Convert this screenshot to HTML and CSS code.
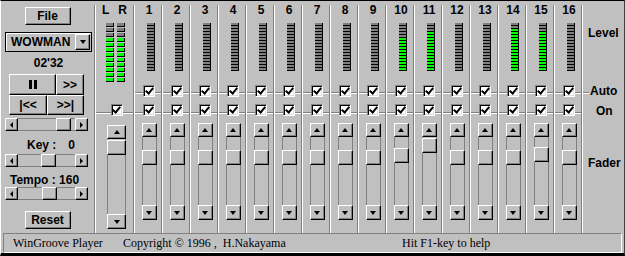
FILE: index.html
```html
<!DOCTYPE html>
<html lang="en">

<head>
    <meta charset="UTF-8">
    <title>WinGroove Player</title>
    <link rel="stylesheet" href="styles.css">
</head>

<body>
    <div class="window">
        <div class="main">

            <!-- Left panel: file, song, transport, key and tempo -->
            <div class="panel">
                <div class="btn file-btn">File</div>
                <div class="combo">
                    <span class="combo-text">WOWMAN</span>
                    <span class="btn combo-btn"><i class="tri tri-down"></i></span>
                </div>
                <div class="time">02'32</div>
                <div class="transport">
                    <div class="btn pause-btn"><span class="pause"></span></div>
                    <div class="btn ff-btn">&gt;&gt;</div>
                    <div class="btn prev-btn">|&lt;&lt;</div>
                    <div class="btn next-btn">&gt;&gt;|</div>
                </div>
                <div class="hscroll pos-scroll">
                    <span class="btn sbtn"><i class="tri tri-left"></i></span>
                    <div class="htrack"><span class="btn thumb" style="margin-left:38px"></span></div>
                    <span class="btn sbtn"><i class="tri tri-right"></i></span>
                </div>
                <div class="value key-label"><span>Key :</span><span class="key-val">0</span></div>
                <div class="hscroll">
                    <span class="btn sbtn"><i class="tri tri-left"></i></span>
                    <div class="htrack"><span class="btn thumb" style="margin-left:23px"></span></div>
                    <span class="btn sbtn"><i class="tri tri-right"></i></span>
                </div>
                <div class="value tempo-label">Tempo : 160</div>
                <div class="hscroll">
                    <span class="btn sbtn"><i class="tri tri-left"></i></span>
                    <div class="htrack"><span class="btn thumb" style="margin-left:24px"></span></div>
                    <span class="btn sbtn"><i class="tri tri-right"></i></span>
                </div>
                <div class="btn reset-btn">Reset</div>
            </div>
            <div class="sep"></div>

            <!-- Master L/R -->
            <div class="master">
                <div class="lr-head"><span>L</span><span>R</span></div>
                <div class="lr-meters">
                    <div class="lr-meter"><div class="lit" style="height:45px"></div></div>
                    <div class="lr-meter"><div class="lit" style="height:45px"></div></div>
                </div>
                <div class="row on"><span class="cb"></span></div>
                <div class="fader master-fader">
                    <span class="btn sbtn up"></span>
                    <div class="vtrack"><span class="btn thumb" style="margin-top:1px"></span></div>
                    <span class="btn sbtn down"></span>
                </div>
            </div>
            <div class="sep"></div>

            <!-- Channels 1-16 -->
            <div class="ch">
                <div class="num">1</div>
                <div class="meter"></div>
                <div class="row auto"><span class="cb"></span></div>
                <div class="row on"><span class="cb"></span></div>
                <div class="fader"><span class="btn sbtn up"></span><div class="vtrack"><span class="btn thumb" style="margin-top:13px"></span></div><span class="btn sbtn down"></span></div>
            </div>
            <div class="sep"></div>
            <div class="ch">
                <div class="num">2</div>
                <div class="meter"></div>
                <div class="row auto"><span class="cb"></span></div>
                <div class="row on"><span class="cb"></span></div>
                <div class="fader"><span class="btn sbtn up"></span><div class="vtrack"><span class="btn thumb" style="margin-top:13px"></span></div><span class="btn sbtn down"></span></div>
            </div>
            <div class="sep"></div>
            <div class="ch">
                <div class="num">3</div>
                <div class="meter"></div>
                <div class="row auto"><span class="cb"></span></div>
                <div class="row on"><span class="cb"></span></div>
                <div class="fader"><span class="btn sbtn up"></span><div class="vtrack"><span class="btn thumb" style="margin-top:13px"></span></div><span class="btn sbtn down"></span></div>
            </div>
            <div class="sep"></div>
            <div class="ch">
                <div class="num">4</div>
                <div class="meter"></div>
                <div class="row auto"><span class="cb"></span></div>
                <div class="row on"><span class="cb"></span></div>
                <div class="fader"><span class="btn sbtn up"></span><div class="vtrack"><span class="btn thumb" style="margin-top:13px"></span></div><span class="btn sbtn down"></span></div>
            </div>
            <div class="sep"></div>
            <div class="ch">
                <div class="num">5</div>
                <div class="meter"></div>
                <div class="row auto"><span class="cb"></span></div>
                <div class="row on"><span class="cb"></span></div>
                <div class="fader"><span class="btn sbtn up"></span><div class="vtrack"><span class="btn thumb" style="margin-top:13px"></span></div><span class="btn sbtn down"></span></div>
            </div>
            <div class="sep"></div>
            <div class="ch">
                <div class="num">6</div>
                <div class="meter"></div>
                <div class="row auto"><span class="cb"></span></div>
                <div class="row on"><span class="cb"></span></div>
                <div class="fader"><span class="btn sbtn up"></span><div class="vtrack"><span class="btn thumb" style="margin-top:13px"></span></div><span class="btn sbtn down"></span></div>
            </div>
            <div class="sep"></div>
            <div class="ch">
                <div class="num">7</div>
                <div class="meter"></div>
                <div class="row auto"><span class="cb"></span></div>
                <div class="row on"><span class="cb"></span></div>
                <div class="fader"><span class="btn sbtn up"></span><div class="vtrack"><span class="btn thumb" style="margin-top:13px"></span></div><span class="btn sbtn down"></span></div>
            </div>
            <div class="sep"></div>
            <div class="ch">
                <div class="num">8</div>
                <div class="meter"></div>
                <div class="row auto"><span class="cb"></span></div>
                <div class="row on"><span class="cb"></span></div>
                <div class="fader"><span class="btn sbtn up"></span><div class="vtrack"><span class="btn thumb" style="margin-top:13px"></span></div><span class="btn sbtn down"></span></div>
            </div>
            <div class="sep"></div>
            <div class="ch">
                <div class="num">9</div>
                <div class="meter"></div>
                <div class="row auto"><span class="cb"></span></div>
                <div class="row on"><span class="cb"></span></div>
                <div class="fader"><span class="btn sbtn up"></span><div class="vtrack"><span class="btn thumb" style="margin-top:13px"></span></div><span class="btn sbtn down"></span></div>
            </div>
            <div class="sep"></div>
            <div class="ch">
                <div class="num">10</div>
                <div class="meter"><div class="lit" style="height:33px"></div></div>
                <div class="row auto"><span class="cb"></span></div>
                <div class="row on"><span class="cb"></span></div>
                <div class="fader"><span class="btn sbtn up"></span><div class="vtrack"><span class="btn thumb" style="margin-top:11px"></span></div><span class="btn sbtn down"></span></div>
            </div>
            <div class="sep"></div>
            <div class="ch">
                <div class="num">11</div>
                <div class="meter"><div class="lit" style="height:39px"></div></div>
                <div class="row auto"><span class="cb"></span></div>
                <div class="row on"><span class="cb"></span></div>
                <div class="fader"><span class="btn sbtn up"></span><div class="vtrack"><span class="btn thumb" style="margin-top:1px"></span></div><span class="btn sbtn down"></span></div>
            </div>
            <div class="sep"></div>
            <div class="ch">
                <div class="num">12</div>
                <div class="meter"></div>
                <div class="row auto"><span class="cb"></span></div>
                <div class="row on"><span class="cb"></span></div>
                <div class="fader"><span class="btn sbtn up"></span><div class="vtrack"><span class="btn thumb" style="margin-top:13px"></span></div><span class="btn sbtn down"></span></div>
            </div>
            <div class="sep"></div>
            <div class="ch">
                <div class="num">13</div>
                <div class="meter"></div>
                <div class="row auto"><span class="cb"></span></div>
                <div class="row on"><span class="cb"></span></div>
                <div class="fader"><span class="btn sbtn up"></span><div class="vtrack"><span class="btn thumb" style="margin-top:13px"></span></div><span class="btn sbtn down"></span></div>
            </div>
            <div class="sep"></div>
            <div class="ch">
                <div class="num">14</div>
                <div class="meter"><div class="lit" style="height:42px"></div></div>
                <div class="row auto"><span class="cb"></span></div>
                <div class="row on"><span class="cb"></span></div>
                <div class="fader"><span class="btn sbtn up"></span><div class="vtrack"><span class="btn thumb" style="margin-top:13px"></span></div><span class="btn sbtn down"></span></div>
            </div>
            <div class="sep"></div>
            <div class="ch">
                <div class="num">15</div>
                <div class="meter"><div class="lit" style="height:39px"></div></div>
                <div class="row auto"><span class="cb"></span></div>
                <div class="row on"><span class="cb"></span></div>
                <div class="fader"><span class="btn sbtn up"></span><div class="vtrack"><span class="btn thumb" style="margin-top:10px"></span></div><span class="btn sbtn down"></span></div>
            </div>
            <div class="sep"></div>
            <div class="ch">
                <div class="num">16</div>
                <div class="meter"></div>
                <div class="row auto"><span class="cb"></span></div>
                <div class="row on"><span class="cb"></span></div>
                <div class="fader"><span class="btn sbtn up"></span><div class="vtrack"><span class="btn thumb" style="margin-top:13px"></span></div><span class="btn sbtn down"></span></div>
            </div>
            <div class="sep"></div>

            <!-- Row labels -->
            <div class="labels">
                <div class="lbl level-lbl">Level</div>
                <div class="lbl auto-lbl">Auto</div>
                <div class="lbl on-lbl">On</div>
                <div class="lbl fader-lbl">Fader</div>
            </div>
        </div>

        <div class="status">
            <span class="st-name">WinGroove Player</span>
            <span class="st-copy">Copyright &copy; 1996 ,&nbsp; H.Nakayama</span>
            <span>Hit F1-key to help</span>
        </div>
    </div>
</body>

</html>
```

FILE: styles.css
```css
* {
    box-sizing: border-box;
}

body {
    margin: 0;
    background-color: #c0c0c0;
    font-family: "Liberation Sans", Arial, sans-serif;
    font-size: 12px;
    font-weight: bold;
    color: #000;
}

.window {
    width: 625px;
    height: 256px;
    border-top: 1px solid #000;
    border-left: 1px solid #fff;
    border-right: 1px solid #404040;
    border-bottom: 3px solid #000;
    display: flex;
    flex-direction: column;
}

.main {
    height: 232px;
    display: flex;
}

/* etched vertical divider */
.sep {
    width: 2px;
    margin-top: 4px;
    border-left: 1px solid #808080;
    border-right: 1px solid #fff;
}

/* raised 3D button */
.btn {
    display: flex;
    align-items: center;
    justify-content: center;
    background-color: #c0c0c0;
    border: 1px solid;
    border-color: #fff #000 #000 #fff;
    box-shadow: inset -1px -1px 0 #808080;
    line-height: 1;
}

.tri {
    display: block;
    width: 0;
    height: 0;
}

.tri-down {
    border-left: 3.5px solid transparent;
    border-right: 3.5px solid transparent;
    border-top: 4px solid #000;
}

.tri-left {
    border-top: 3px solid transparent;
    border-bottom: 3px solid transparent;
    border-right: 3px solid #000;
}

.tri-right {
    border-top: 3px solid transparent;
    border-bottom: 3px solid transparent;
    border-left: 3px solid #000;
}

/* Left panel */
.panel {
    width: 93px;
    display: flex;
    flex-direction: column;
    align-items: center;
}

.file-btn {
    margin-top: 6px;
    width: 46px;
    height: 18px;
}

.combo {
    margin-top: 7px;
    margin-left: 2px;
    width: 87px;
    height: 20px;
    padding: 1px;
    border: 1px solid #000;
    box-shadow: inset 1px 1px 0 #fff;
    display: flex;
    align-items: center;
}

.combo-text {
    flex: 1;
    padding-left: 4px;
}

.combo-btn {
    width: 15px;
    height: 16px;
}

.time {
    margin-top: 4px;
    height: 14px;
    line-height: 14px;
    margin-left: 2px;
}

.transport {
    margin-top: 4px;
    margin-right: 2px;
    width: 75px;
    display: grid;
    grid-template-columns: 38px 9px 28px;
    grid-template-rows: 21px 20px;
}

.pause-btn {
    grid-column: 1 / 3;
}

.prev-btn {
    grid-column: 1 / 2;
}

.next-btn {
    grid-column: 2 / 4;
}

.pause {
    width: 8px;
    height: 9px;
    border-left: 3px solid #000;
    border-right: 3px solid #000;
}

.hscroll {
    width: 83px;
    height: 13px;
    display: flex;
    margin-right: 2px;
}

.pos-scroll {
    margin-top: 3px;
}

.sbtn {
    flex: none;
    width: 13px;
}

.htrack {
    flex: 1;
    border-top: 1px solid #808080;
    border-bottom: 1px solid #808080;
    display: flex;
}

.htrack .thumb {
    width: 15px;
    height: 13px;
    margin-top: -1px;
}

.value {
    height: 14px;
    line-height: 14px;
    align-self: flex-start;
}

.key-label {
    margin-top: 7px;
    margin-bottom: 2px;
    padding-left: 26px;
}

.key-val {
    margin-left: 12px;
}

.tempo-label {
    margin-top: 6px;
    padding-left: 9px;
}

.reset-btn {
    margin-top: 11px;
    width: 46px;
    height: 18px;
}

/* Master L/R */
.master {
    width: 37px;
    display: flex;
    flex-direction: column;
    align-items: center;
}

.lr-head {
    margin-top: 3px;
    height: 12px;
    line-height: 12px;
    display: flex;
    gap: 9px;
}

.lr-meters {
    margin-top: 7px;
    margin-left: 2px;
    display: flex;
    gap: 3px;
}

.lr-meter {
    width: 8px;
    height: 60px;
    display: flex;
    flex-direction: column;
    justify-content: flex-end;
    background:
        repeating-linear-gradient(#000 0 4px, transparent 4px 5px) right top / 1px 100% no-repeat,
        repeating-linear-gradient(#808080 0 3px, #000 3px 4px, transparent 4px 5px);
}

.lr-meter .lit {
    background:
        repeating-linear-gradient(#000 0 4px, transparent 4px 5px) right top / 1px 100% no-repeat,
        repeating-linear-gradient(#00ff00 0 3px, #000 3px 4px, transparent 4px 5px);
}

.master .row.on {
    margin-top: 21px;
}

.master .cb {
    margin-left: 4px;
}

/* Channel strips */
.ch {
    width: 26px;
    display: flex;
    flex-direction: column;
    align-items: center;
}

.num {
    margin-top: 3px;
    margin-left: 2px;
    height: 12px;
    line-height: 12px;
}

.meter {
    margin-top: 7px;
    margin-left: 6px;
    width: 8px;
    height: 48px;
    display: flex;
    flex-direction: column;
    justify-content: flex-end;
    background:
        linear-gradient(#000, #000) right top / 1px 100% no-repeat,
        repeating-linear-gradient(#808080 0 2px, #000 2px 3px);
}

.meter .lit {
    background:
        linear-gradient(#000, #000) right top / 1px 100% no-repeat,
        repeating-linear-gradient(#00ff00 0 2px, #000 2px 3px);
}

.row {
    width: 100%;
    height: 12px;
    display: flex;
    justify-content: center;
}

.row.auto {
    margin-top: 14px;
    background:
        linear-gradient(#808080, #808080) 0 7px / 100% 1px no-repeat,
        linear-gradient(#fff, #fff) 0 8px / 100% 1px no-repeat;
}

.row.on {
    margin-top: 7px;
    background:
        linear-gradient(#808080, #808080) 0 8px / 100% 1px no-repeat,
        linear-gradient(#fff, #fff) 0 9px / 100% 1px no-repeat;
}

.ch .cb {
    margin-left: 2px;
}

/* sunken check box */
.cb {
    width: 12px;
    height: 12px;
    background-color: #fff;
    border: 1px solid;
    border-color: #808080 #fff #fff #808080;
    box-shadow: inset 1px 1px 0 #000, inset -1px -1px 0 #dfdfdf;
    display: flex;
    align-items: center;
    justify-content: center;
}

.cb::after {
    content: "";
    width: 3px;
    height: 6px;
    margin-top: -2px;
    border: solid #000;
    border-width: 0 2px 2px 0;
    transform: rotate(40deg);
}

/* vertical fader */
.fader {
    margin-top: 7px;
    margin-left: 2px;
    width: 15px;
    height: 97px;
    display: flex;
    flex-direction: column;
}

.fader .sbtn {
    width: 100%;
    height: 14px;
}

.fader .sbtn.down {
    height: 15px;
}

.fader .sbtn.up::before,
.fader .sbtn.down::before {
    content: "";
    border-left: 3.5px solid transparent;
    border-right: 3.5px solid transparent;
}

.fader .sbtn.up::before {
    border-bottom: 4px solid #000;
}

.fader .sbtn.down::before {
    border-top: 4px solid #000;
}

.vtrack {
    flex: 1;
    border-left: 1px solid #808080;
    border-right: 1px solid #808080;
}

.vtrack .thumb {
    width: calc(100% + 2px);
    height: 15px;
    margin-left: -1px;
}

.master .master-fader {
    margin-top: 9px;
    margin-left: 4px;
    width: 19px;
    height: 104px;
}

/* Row labels */
.labels {
    width: 41px;
    display: flex;
    flex-direction: column;
}

.lbl {
    height: 14px;
    line-height: 14px;
}

.level-lbl {
    margin-top: 25px;
    padding-left: 5px;
}

.auto-lbl {
    margin-top: 45px;
    height: 12px;
    line-height: 13px;
    padding-left: 7px;
    background:
        linear-gradient(#808080, #808080) 0 7px / 6px 1px no-repeat,
        linear-gradient(#fff, #fff) 0 8px / 6px 1px no-repeat;
}

.on-lbl {
    margin-top: 7px;
    height: 12px;
    line-height: 15px;
    padding-left: 13px;
}

.fader-lbl {
    margin-top: 40px;
    padding-left: 5px;
}

/* Status bar */
.status {
    margin: 0 2px;
    height: 20px;
    border: 1px solid;
    border-color: #808080 #fff #fff #808080;
    display: flex;
    align-items: center;
    font-family: "Liberation Serif", "Times New Roman", serif;
    font-weight: normal;
    font-size: 12px;
}

.st-name {
    width: 119px;
    padding-left: 9px;
}

.st-copy {
    width: 279px;
}
```
